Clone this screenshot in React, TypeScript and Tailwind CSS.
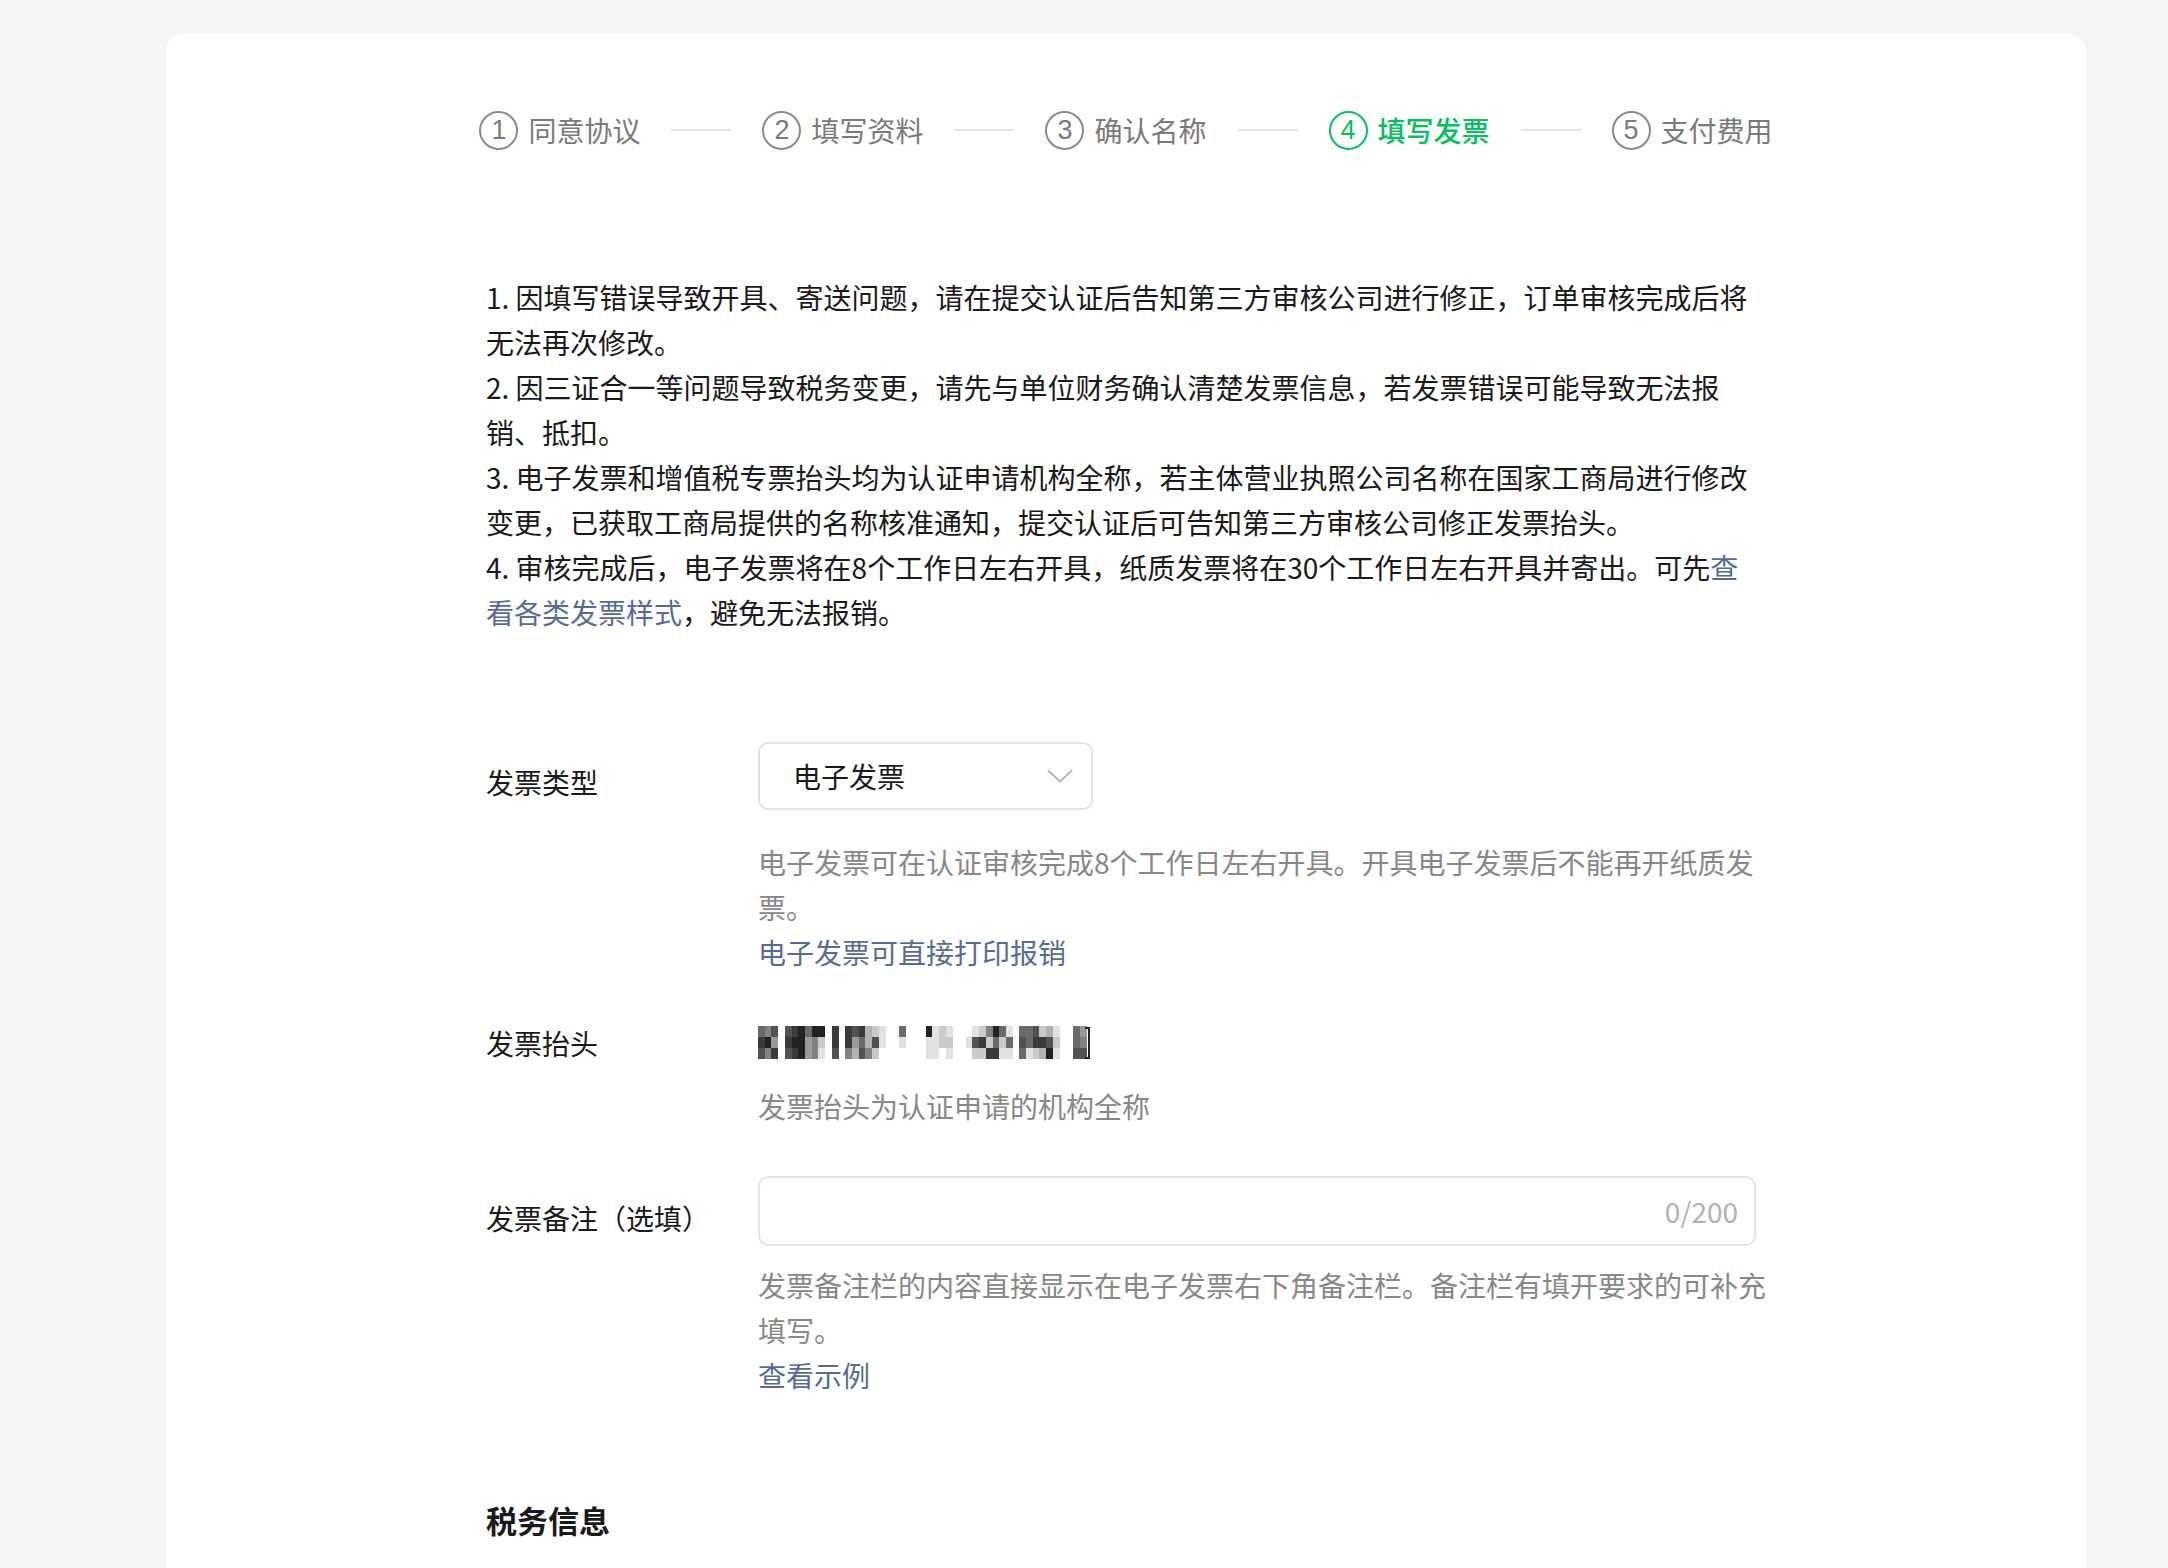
import React from 'react'

const font = { fontFamily: '"Noto Sans CJK SC", "Noto Sans", sans-serif' }

const steps = [
  { n: '1', label: '同意协议' },
  { n: '2', label: '填写资料' },
  { n: '3', label: '确认名称' },
  { n: '4', label: '填写发票', active: true },
  { n: '5', label: '支付费用' },
]

// mosaic of the blurred company name, 3 rows, darkness 0-9 per cell
const mosaic = [
  '6570789699080878321006000912100012596106672310064',
  '8940899452080846371001000112200178262607688720065',
  '7580789451070537520000000110100022881106123910077',
]

const Mosaic = () => (
  <svg width="340" height="35" viewBox="0 0 340 35" className="block" shapeRendering="crispEdges">
    {mosaic.map((row, r) =>
      row.split('').map((c, i) => {
        const d = Number(c)
        if (d === 0) return null
        const v = Math.round(250 - d * 24)
        return (
          <rect
            key={`${r}-${i}`}
            x={i * 6.7}
            y={r * 11}
            width={7}
            height={11.2}
            fill={`rgb(${v},${v},${v})`}
          />
        )
      }),
    )}
    <path d="M327 2h4v30h-4" fill="none" stroke="#222" strokeWidth="1.6" />
  </svg>
)

const Step = ({ n, label, active }: { n: string; label: string; active?: boolean }) => (
  <div className={`flex items-center ${active ? 'text-[#07c160]' : 'text-[#7a7a7a]'}`}>
    <div
      className={`flex h-[39px] w-[39px] items-center justify-center rounded-full border-2 text-[27px] leading-none ${
        active ? 'border-[#07c160]' : 'border-[#8a8a8a]'
      }`}
      style={{ fontFamily: '"Liberation Sans", sans-serif' }}
    >
      {n}
    </div>
    <span className={`ml-[10px] text-[28px] leading-[40px] ${active ? 'font-medium' : ''}`}>{label}</span>
  </div>
)

const Connector = () => <div className="mx-[31px] h-[2px] w-[60px] bg-[#e5e5e5]" />

const Link = ({ children }: { children: React.ReactNode }) => (
  <span className="text-[#576b95]">{children}</span>
)

export default function App() {
  return (
    <div className="min-h-screen bg-[#f5f6f8] pl-[166px] pt-[34px]" style={font}>
      <div className="h-[1600px] w-[1920px] rounded-t-[16px] bg-white pt-[76px] shadow-[0_0_6px_rgba(0,0,0,0.02)]">
        {/* steps */}
        <div className="flex items-center justify-center">
          {steps.map((s, i) => (
            <React.Fragment key={s.n}>
              <Step {...s} />
              {i < steps.length - 1 && <Connector />}
            </React.Fragment>
          ))}
        </div>

        <div className="mx-auto w-[1280px]">
          {/* notice */}
          <div className="mt-[125px] whitespace-nowrap text-[28px] leading-[45px] text-[#1a1a1a]">
            <p>
              1. 因填写错误导致开具、寄送问题，请在提交认证后告知第三方审核公司进行修正，订单审核完成后将
              <br />
              无法再次修改。
            </p>
            <p>
              2. 因三证合一等问题导致税务变更，请先与单位财务确认清楚发票信息，若发票错误可能导致无法报
              <br />
              销、抵扣。
            </p>
            <p>
              3. 电子发票和增值税专票抬头均为认证申请机构全称，若主体营业执照公司名称在国家工商局进行修改
              <br />
              变更，已获取工商局提供的名称核准通知，提交认证后可告知第三方审核公司修正发票抬头。
            </p>
            <p>
              4. 审核完成后，电子发票将在8个工作日左右开具，纸质发票将在30个工作日左右开具并寄出。可先
              <Link>查</Link>
              <br />
              <Link>看各类发票样式</Link>，避免无法报销。
            </p>
          </div>

          {/* invoice type */}
          <div className="mt-[107px] flex">
            <div className="w-[272px] shrink-0 pt-[18px] text-[28px] leading-[45px] text-[#1a1a1a]">发票类型</div>
            <div className="flex-1">
              <div className="flex h-[68px] w-[335px] items-center justify-between rounded-[10px] border-2 border-[#e1e3e7] pl-[33px] pr-[18px]">
                <span className="text-[28px] leading-none text-[#1a1a1a]">电子发票</span>
                <svg width="26" height="14" viewBox="0 0 26 14">
                  <path d="M1 1.5l12 11 12-11" fill="none" stroke="#b5b5b5" strokeWidth="2" />
                </svg>
              </div>
              <div className="mt-[30px] whitespace-nowrap text-[28px] leading-[45px] text-[#888]">
                电子发票可在认证审核完成8个工作日左右开具。开具电子发票后不能再开纸质发
                <br />
                票。
                <br />
                <Link>电子发票可直接打印报销</Link>
              </div>
            </div>
          </div>

          {/* invoice title */}
          <div className="mt-[46px] flex">
            <div className="w-[272px] shrink-0 text-[28px] leading-[45px] text-[#1a1a1a]">发票抬头</div>
            <div className="flex-1">
              <div className="flex h-[45px] items-center">
                <Mosaic />
              </div>
              <div className="mt-[18px] text-[28px] leading-[45px] text-[#888]">发票抬头为认证申请的机构全称</div>
            </div>
          </div>

          {/* remark */}
          <div className="mt-[47px] flex">
            <div className="w-[272px] shrink-0 pt-[20px] text-[28px] leading-[45px] text-[#1a1a1a]">发票备注（选填）</div>
            <div className="flex-1">
              <div className="flex h-[70px] w-[998px] items-center justify-end rounded-[10px] border-2 border-[#e5e5e5] pr-[16px]">
                <span className="text-[28px] leading-none text-[#b2b2b2]">0/200</span>
              </div>
              <div className="mt-[17px] whitespace-nowrap text-[28px] leading-[45px] text-[#888]">
                发票备注栏的内容直接显示在电子发票右下角备注栏。备注栏有填开要求的可补充
                <br />
                填写。
                <br />
                <Link>查看示例</Link>
              </div>
            </div>
          </div>

          <h2 className="mt-[99px] text-[31px] font-bold leading-[45px] text-[#1a1a1a]">税务信息</h2>
        </div>
      </div>
    </div>
  )
}
